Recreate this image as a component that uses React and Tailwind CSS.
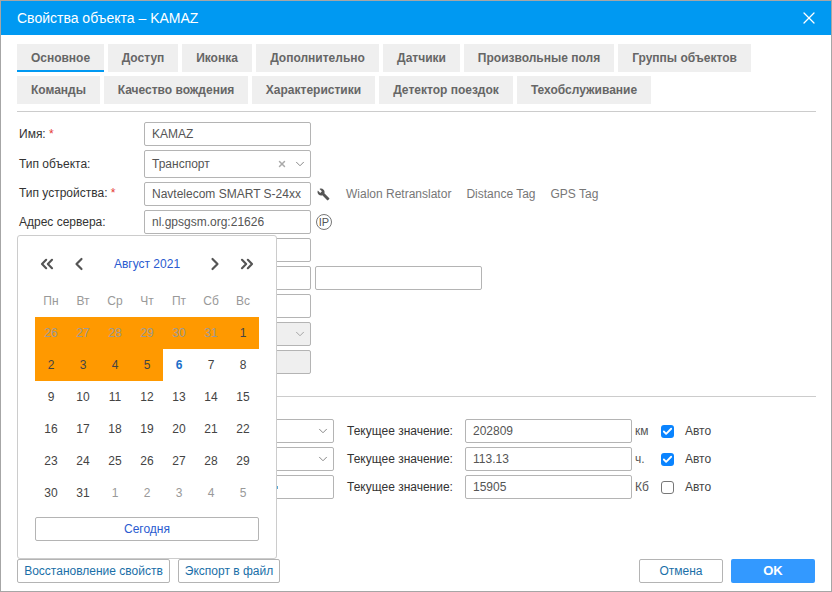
import { X, ChevronDown, ChevronLeft, ChevronRight, ChevronsLeft, ChevronsRight, Check } from "lucide-react";

const TABS_TOP = [
  { label: "Основное", w: "w-[87px]", active: true },
  { label: "Доступ", w: "w-[70px]" },
  { label: "Иконка", w: "w-[70px]" },
  { label: "Дополнительно", w: "w-[123px]" },
  { label: "Датчики", w: "w-[77px]" },
  { label: "Произвольные поля", w: "w-[150px]" },
  { label: "Группы объектов", w: "w-[133px]" },
];

const TABS_BOTTOM = [
  { label: "Команды", w: "w-[83px]" },
  { label: "Качество вождения", w: "w-[144px]" },
  { label: "Характеристики", w: "w-[123px]" },
  { label: "Детектор поездок", w: "w-[134px]" },
  { label: "Техобслуживание", w: "w-[134px]" },
];

const WEEK_DAYS = ["Пн", "Вт", "Ср", "Чт", "Пт", "Сб", "Вс"];

const WEEKS = [
  [26, 27, 28, 29, 30, 31, 1],
  [2, 3, 4, 5, 6, 7, 8],
  [9, 10, 11, 12, 13, 14, 15],
  [16, 17, 18, 19, 20, 21, 22],
  [23, 24, 25, 26, 27, 28, 29],
  [30, 31, 1, 2, 3, 4, 5],
];

const COUNTERS = [
  { value: "202809", unit: "км", auto: true, select: true },
  { value: "113.13", unit: "ч.", auto: true, select: true },
  { value: "15905", unit: "Кб", auto: false, select: false },
];

function Tab({ tab }) {
  return (
    <div className={`${tab.w} h-7 flex items-center justify-center bg-[#efefef] text-[12px] font-bold text-[#666666] ${tab.active ? "shadow-[inset_0_-2px_0_#0099f2]" : ""}`}>
      {tab.label}
    </div>
  );
}

function Field({ label, required, labelClass = "", className = "h-6", children }) {
  return (
    <div className="flex items-center">
      <div className={`w-[127px] text-[12px] text-[#333333] pl-[2px] ${labelClass}`}>
        {label}
        {required && <span className="text-[#e53935]"> *</span>}
      </div>
      <div className={`w-[167px] ${className} border border-[#b4b4b4] rounded-[2px] flex items-center px-[7px] text-[12px] text-[#555555]`}>
        {children}
      </div>
    </div>
  );
}

function Calendar() {
  return (
    <div className="absolute left-[16px] top-[234px] w-[260px] h-[324px] bg-white border border-[#cccccc] rounded-[3px] px-[17px] pt-[16px]">
      <div className="flex items-center h-6 text-[#555555]">
        <ChevronsLeft className="w-5 h-5 ml-[2px]" strokeWidth={2.6} />
        <ChevronLeft className="w-5 h-5 ml-[12px]" strokeWidth={2.6} />
        <div className="flex-1 text-center text-[12px] text-[#2a5bd0]">Август 2021</div>
        <ChevronRight className="w-5 h-5 mr-[12px]" strokeWidth={2.6} />
        <ChevronsRight className="w-5 h-5 mr-[2px]" strokeWidth={2.6} />
      </div>
      <div className="grid grid-cols-7 mt-[9px] h-8 items-center text-[12px] text-[#999999] text-center">
        {WEEK_DAYS.map((d) => (
          <div key={d}>{d}</div>
        ))}
      </div>
      <div className="grid grid-cols-7 text-[12px] text-center">
        {WEEKS.map((week, w) =>
          week.map((day, d) => {
            const outside = (w === 0 && d < 6) || (w === 5 && d > 1);
            const selected = w === 0 || (w === 1 && d < 4);
            const today = w === 1 && d === 4;
            let color = "text-[#444444]";
            if (outside) color = "text-[#999999]";
            if (today) color = "text-[#1a6fc9] font-bold";
            return (
              <div
                key={`${w}-${d}`}
                className={`h-8 flex items-center justify-center ${selected ? "bg-[#ff9900]" : ""} ${color}`}
              >
                {day}
              </div>
            );
          })
        )}
      </div>
      <div className="mt-[8px] h-6 border border-[#b4b4b4] rounded-[2px] flex items-center justify-center text-[12px] text-[#2a5bd0]">
        Сегодня
      </div>
    </div>
  );
}

export default function App() {
  return (
    <div className="relative w-[832px] h-[592px] bg-white border border-[#a6a6a6] flex flex-col font-['Liberation_Sans','Roboto',sans-serif]">
      <div className="h-[34px] bg-[#0099f2] flex items-center justify-between pl-4 pr-3 text-white">
        <div className="text-[14px]">Свойства объекта – KAMAZ</div>
        <X className="w-5 h-5" strokeWidth={1.5} />
      </div>

      <div className="flex-1 flex flex-col px-4 pt-[9px]">
        <div className="flex gap-1">
          {TABS_TOP.map((t) => (
            <Tab key={t.label} tab={t} />
          ))}
        </div>
        <div className="flex gap-1 mt-1">
          {TABS_BOTTOM.map((t) => (
            <Tab key={t.label} tab={t} />
          ))}
        </div>
        <div className="h-px bg-[#cccccc] mt-[7px] w-[799px]" />

        <div className="flex flex-col gap-1 mt-[10px]">
          <Field label="Имя:" required>KAMAZ</Field>
          <Field label="Тип объекта:" className="h-7">
            <span className="flex-1">Транспорт</span>
            <X className="w-[10px] h-[10px] text-[#aaaaaa] mr-[6px]" strokeWidth={3.5} />
            <ChevronDown className="w-[14px] h-[14px] text-[#777777] -mr-1" strokeWidth={1.5} />
          </Field>
          <div className="flex items-center">
            <Field label="Тип устройства:" labelClass="-mt-[2px]" required>Navtelecom SMART S-24xx</Field>
            <svg className="ml-[6px] w-[13px] h-[13px]" viewBox="0 0 24 24" fill="#555555">
              <path d="M22.7 19l-9.1-9.1c.9-2.3.4-5-1.5-6.9-2-2-5-2.4-7.4-1.3L9 6 6 9 1.6 4.7C.4 7.1.9 10.1 2.9 12.1c1.9 1.9 4.6 2.4 6.9 1.5l9.1 9.1c.4.4 1 .4 1.4 0l2.3-2.3c.5-.4.5-1.1.1-1.4z" />
            </svg>
            <div className="ml-[16px] text-[12px] text-[#777777] flex gap-[15px]">
              <span>Wialon Retranslator</span>
              <span>Distance Tag</span>
              <span>GPS Tag</span>
            </div>
          </div>
          <div className="flex items-center">
            <Field label="Адрес сервера:">nl.gpsgsm.org:21626</Field>
            <div className="ml-[5px] w-4 h-4 rounded-full border border-[#777777] flex items-center justify-center text-[11px] text-[#555555]">IP</div>
          </div>
          <Field label="" />
          <div className="flex items-center">
            <Field label="" />
            <div className="ml-1 w-[167px] h-6 border border-[#b4b4b4] rounded-[2px]" />
          </div>
          <Field label="" />
          <Field label="" className="h-6 bg-[#efefef] justify-end">
            <ChevronDown className="w-[14px] h-[14px] text-[#999999] -mr-1" strokeWidth={1.5} />
          </Field>
          <Field label="" className="h-6 bg-[#efefef]" />
        </div>

        <div className="h-px bg-[#cccccc] mt-[22px] w-[799px]" />

        <div className="flex flex-col gap-1 mt-[22px]">
          {COUNTERS.map((c) => (
            <div key={c.unit} className="flex items-center h-6">
              <div className="ml-[127px] w-[190px] h-6 border border-[#b4b4b4] rounded-[2px] flex items-center justify-end px-[7px]">
                {c.select ? (
                  <ChevronDown className="w-[14px] h-[14px] text-[#777777] -mr-1" strokeWidth={1.5} />
                ) : (
                  <div className="w-px h-[3px] bg-[#5aa9d6] mr-[48px]" />
                )}
              </div>
              <div className="ml-[13px] w-[118px] text-[12px] text-[#333333]">Текущее значение:</div>
              <div className="w-[167px] h-6 border border-[#b4b4b4] rounded-[2px] flex items-center px-[7px] text-[12px] text-[#555555]">
                {c.value}
              </div>
              <div className="w-[29px] pl-[3px] text-[12px] text-[#555555] -mt-px">{c.unit}</div>
              {c.auto ? (
                <div className="w-[13px] h-[13px] rounded-[3px] bg-[#0a84ff] flex items-center justify-center">
                  <Check className="w-[11px] h-[11px] text-white" strokeWidth={4} />
                </div>
              ) : (
                <div className="w-[13px] h-[13px] rounded-[3px] border border-[#777777]" />
              )}
              <div className="ml-[11px] text-[12px] text-[#444444]">Авто</div>
            </div>
          ))}
        </div>

        <div className="mt-auto mb-2 flex items-center">
          <div className="w-[153px] h-6 border border-[#b4b4b4] rounded-[2px] flex items-center justify-center text-[12px] text-[#1a6fa8]">Восстановление свойств</div>
          <div className="ml-2 w-[102px] h-6 border border-[#b4b4b4] rounded-[2px] flex items-center justify-center text-[12px] text-[#1a6fa8]">Экспорт в файл</div>
          <div className="ml-auto flex gap-2">
            <div className="w-[84px] h-6 border border-[#b4b4b4] rounded-[2px] flex items-center justify-center text-[12px] text-[#1a6fa8]">Отмена</div>
            <div className="w-[84px] h-6 rounded-[2px] bg-[#3399ff] flex items-center justify-center text-[13px] font-bold text-white">OK</div>
          </div>
        </div>
      </div>

      <Calendar />
    </div>
  );
}
